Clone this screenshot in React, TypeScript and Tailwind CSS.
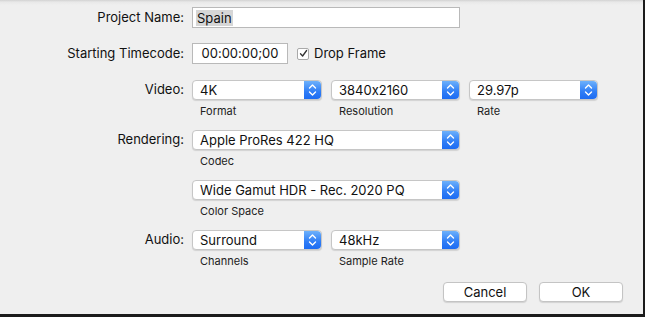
const font = 'font-["Inter","Liberation_Sans",sans-serif] [font-feature-settings:"calt"_0]';

function Chevrons() {
  return (
    <div className="w-[17px] self-stretch rounded-r-[4px] bg-[linear-gradient(to_bottom,#6db1fb,#2f7df6_60%,#1d6cf2)] flex items-center justify-center">
      <svg width="9" height="14" viewBox="0 0 9 14" fill="none" stroke="white" strokeWidth="1.4" strokeLinecap="round" strokeLinejoin="round">
        <path d="M1.5 5 L4.5 2 L7.5 5" />
        <path d="M1.5 9 L4.5 12 L7.5 9" />
      </svg>
    </div>
  );
}

function Popup({ value, width }: { value: string; width: string }) {
  return (
    <div className={`${width} h-[20px] flex bg-white rounded-[4px] border border-[#c6c6c6] shadow-[0_1px_1px_rgba(0,0,0,0.12)]`}>
      <div className="flex-1 pl-[7px] text-[13px] leading-[19px] text-[#111]">{value}</div>
      <Chevrons />
    </div>
  );
}

function Field({ value, caption, width }: { value: string; caption: string; width: string }) {
  return (
    <div className="flex flex-col">
      <Popup value={value} width={width} />
      <div className="mt-[4px] pl-[8px] text-[11px] leading-[14px] text-[#222]">{caption}</div>
    </div>
  );
}

function Label({ children }: { children: string }) {
  return <div className="w-[185px] pr-[1px] text-right text-[13px] text-[#111] shrink-0">{children}</div>;
}

export default function App() {
  return (
    <div className={`w-[645px] h-[317px] bg-[#1b1b1b] ${font}`}>
      <div className="w-[643px] h-[314px] bg-[linear-gradient(to_bottom,#d2d2d2,#e8e8e8_2px,#efefef_5px)] pt-[7px]">
        <div className="flex items-center gap-[7px]">
          <Label>Project Name:</Label>
          <div className="w-[268px] h-[21px] bg-white border border-[#b9b9b9] flex items-center pl-[3px]">
            <span className="bg-[#d6d6d6] px-[1px] text-[13px] leading-[16px] text-[#111]">Spain</span>
          </div>
        </div>

        <div className="flex items-center gap-[7px] mt-[15px]">
          <Label>Starting Timecode:</Label>
          <div className="w-[96px] h-[21px] bg-white border border-[#b9b9b9] flex items-center justify-center text-[13px] text-[#111]">
            00:00:00;00
          </div>
          <div className="ml-[2px] w-[12px] h-[12px] bg-white border border-[#a9a9a9] rounded-[2px] flex items-center justify-center">
            <svg width="9" height="9" viewBox="0 0 9 9" fill="none" stroke="#333" strokeWidth="1.3" strokeLinecap="round" strokeLinejoin="round">
              <path d="M1.5 4.8 L3.6 7 L7.6 1.5" />
            </svg>
          </div>
          <span className="-ml-[2px] text-[13px] text-[#111]">Drop Frame</span>
        </div>

        <div className="flex items-start gap-[7px] mt-[16px]">
          <div className="h-[20px] flex items-center"><Label>Video:</Label></div>
          <div className="flex gap-[9px]">
            <Field value="4K" caption="Format" width="w-[130px]" />
            <Field value="3840x2160" caption="Resolution" width="w-[129px]" />
            <Field value="29.97p" caption="Rate" width="w-[129px]" />
          </div>
        </div>

        <div className="flex items-start gap-[7px] mt-[12px]">
          <div className="h-[20px] flex items-center"><Label>Rendering:</Label></div>
          <Field value="Apple ProRes 422 HQ" caption="Codec" width="w-[268px]" />
        </div>

        <div className="flex items-start gap-[7px] mt-[12px]">
          <div className="w-[185px]" />
          <Field value="Wide Gamut HDR - Rec. 2020 PQ" caption="Color Space" width="w-[268px]" />
        </div>

        <div className="flex items-start gap-[7px] mt-[12px]">
          <div className="h-[20px] flex items-center"><Label>Audio:</Label></div>
          <div className="flex gap-[9px]">
            <Field value="Surround" caption="Channels" width="w-[130px]" />
            <Field value="48kHz" caption="Sample Rate" width="w-[129px]" />
          </div>
        </div>

        <div className="flex justify-end gap-[12px] pr-[20px] mt-[14px]">
          <button className="w-[84px] h-[20px] bg-white border border-[#c4c4c4] rounded-[4px] shadow-[0_1px_1px_rgba(0,0,0,0.12)] text-[13px] leading-[18px] text-[#111]">Cancel</button>
          <button className="w-[84px] h-[20px] bg-white border border-[#c4c4c4] rounded-[4px] shadow-[0_1px_1px_rgba(0,0,0,0.12)] text-[13px] leading-[18px] text-[#111]">OK</button>
        </div>
      </div>
    </div>
  );
}
